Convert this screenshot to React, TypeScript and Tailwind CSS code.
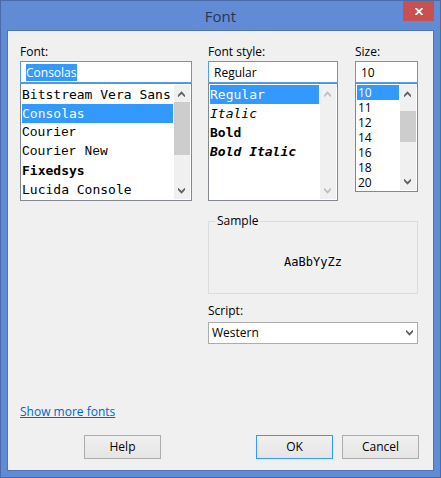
import { useEffect, useRef, useState } from "react";
import { clsx } from "clsx";

type Item = { name: string; className?: string };

const FONTS: Item[] = [
  { name: "Bitstream Vera Sans" },
  { name: "Consolas" },
  { name: "Courier", className: "font-['Liberation_Mono',monospace]" },
  { name: "Courier New", className: "font-['Liberation_Mono',monospace]" },
  { name: "Fixedsys", className: "font-bold" },
  { name: "Lucida Console" },
];

const STYLES: Item[] = [
  { name: "Regular" },
  { name: "Italic", className: "italic" },
  { name: "Bold", className: "font-bold" },
  { name: "Bold Italic", className: "font-bold italic" },
];

const SIZES: Item[] = ["10", "11", "12", "14", "16", "18", "20"].map((name) => ({ name }));

function Chevron({ up = false, className }: { up?: boolean; className?: string }) {
  return (
    <svg viewBox="0 0 8 6" className={clsx("h-[6px] w-[8px]", className)} aria-hidden="true">
      <path
        d={up ? "M0 6V4L3.5 0.3L7 4V6H6.6L3.5 3L0.4 6Z" : "M0 0V2L3.5 5.7L7 2V0H6.6L3.5 3L0.4 0Z"}
        fill="currentColor"
      />
    </svg>
  );
}

function ScrollBar({ thumb }: { thumb?: string }) {
  return (
    <div
      className={clsx(
        "flex w-4 shrink-0 flex-col items-center bg-[#f0f0f0]",
        thumb ? "text-[#606060]" : "text-[#bfbfbf]",
      )}
    >
      <div className="flex h-[17px] shrink-0 items-center">
        <Chevron up />
      </div>
      <div className="flex w-full flex-1 flex-col">
        {thumb && <div className={clsx("w-full bg-[#cdcdcd]", thumb)} />}
      </div>
      <div className="flex h-[17px] shrink-0 items-center">
        <Chevron />
      </div>
    </div>
  );
}

type PickerProps = {
  id: string;
  label: string;
  items: Item[];
  initial: string;
  className: string;
  frameClass: string;
  listClass?: string;
  rowClass: string;
  thumb?: string;
  focused?: boolean;
};

function Picker({
  id,
  label,
  items,
  initial,
  className,
  frameClass,
  listClass,
  rowClass,
  thumb,
  focused,
}: PickerProps) {
  const [value, setValue] = useState(initial);
  const input = useRef<HTMLInputElement>(null);

  useEffect(() => {
    if (focused) {
      input.current?.focus();
      input.current?.select();
    }
  }, [focused]);

  return (
    <div className={clsx("flex min-w-0 flex-col", className)}>
      <label htmlFor={id} className="leading-[18px]">
        {label}
      </label>
      <input
        id={id}
        ref={input}
        value={value}
        onChange={(e) => setValue(e.target.value)}
        className="h-[22px] w-full border border-[#569de5] bg-white px-[5px] outline-none selection:bg-[#3399ff] selection:text-white"
      />
      <div className={clsx("flex border border-[#828790] bg-white p-px", frameClass)}>
        <ul
          role="listbox"
          aria-label={label}
          className={clsx("mr-px min-w-0 flex-1 overflow-hidden whitespace-nowrap", listClass)}
        >
          {items.map((item) => (
            <li
              key={item.name}
              role="option"
              aria-selected={item.name === value}
              onClick={() => setValue(item.name)}
              className={clsx(
                "overflow-hidden",
                rowClass,
                item.className,
                item.name === value && "bg-[#3399ff] text-white",
              )}
            >
              {item.name}
            </li>
          ))}
        </ul>
        <ScrollBar thumb={thumb} />
      </div>
    </div>
  );
}

const button =
  "h-6 w-[77px] border bg-linear-to-b from-[#f0f0f0] to-[#e5e5e5] text-center leading-[20px]";
const monoList = "font-['DejaVu_Sans_Mono',monospace] text-[13px]";
const monoRow = "h-[19px] leading-[19px]";

export default function App() {
  return (
    <div className="flex min-h-screen flex-col border border-[#4a6ba8] bg-[#628bd5] px-[6px] pb-[6px] font-['Open_Sans','Noto_Sans',sans-serif] text-[12px] text-black">
      <header className="grid h-[29px] grid-cols-[1fr_auto_1fr]">
        <h1 className="col-start-2 text-[15px] leading-[30px] text-[#2b3554]">Font</h1>
        <button
          type="button"
          aria-label="Close"
          className="flex h-5 w-[31px] items-center justify-center justify-self-end bg-[#c75050] text-white"
        >
          <svg viewBox="0 0 8 7" className="h-[7px] w-[8px]" aria-hidden="true">
            <path d="M0.5 0L7.5 7M7.5 0L0.5 7" stroke="currentColor" strokeWidth="1.8" />
          </svg>
        </button>
      </header>

      <main className="flex flex-1 flex-col border border-[#4d73b8] bg-[#f0f0f0] pt-3 pb-[11px]">
        <div className="flex gap-4 pr-[15px] pl-3">
          <Picker
            id="font"
            label="Font:"
            items={FONTS}
            initial="Consolas"
            className="flex-1"
            frameClass="h-[118px]"
            listClass={monoList}
            rowClass={monoRow}
            thumb="h-[53px]"
            focused
          />
          <div className="flex w-[210px] flex-col">
            <div className="flex justify-between">
              <Picker
                id="style"
                label="Font style:"
                items={STYLES}
                initial="Regular"
                className="w-[130px]"
                frameClass="h-[118px]"
                listClass={monoList}
                rowClass={monoRow}
              />
              <Picker
                id="size"
                label="Size:"
                items={SIZES}
                initial="10"
                className="w-[63px]"
                frameClass="h-[109px]"
                rowClass="h-[15px] px-px leading-[15px]"
                thumb="mt-[9px] h-[31px]"
              />
            </div>

            <fieldset className="mt-[11px] h-[82px] border border-[#dcdcdc] px-[6px]">
              <legend className="px-[2px] leading-[18px]">Sample</legend>
              <p className="pt-6 text-center font-['DejaVu_Sans_Mono',monospace] leading-[16px]">
                AaBbYyZz
              </p>
            </fieldset>

            <label htmlFor="script" className="mt-2 mb-[2px] leading-[18px]">
              Script:
            </label>
            <div className="grid items-center">
              <select
                id="script"
                className="col-start-1 row-start-1 h-[22px] w-full appearance-none border border-[#acacac] bg-white px-[3px]"
              >
                <option>Western</option>
              </select>
              <Chevron className="pointer-events-none col-start-1 row-start-1 mr-1 justify-self-end text-[#606060]" />
            </div>
          </div>
        </div>

        <div className="mt-auto pl-3">
          <a href="#more" className="leading-[18px] text-[#0066cc] underline">
            Show more fonts
          </a>
        </div>
        <footer className="mt-[14px] flex pr-[14px] pl-[76px]">
          <button type="button" className={clsx(button, "mr-auto border-[#acacac]")}>
            Help
          </button>
          <button type="button" className={clsx(button, "mr-[9px] border-[#3399ff]")}>
            OK
          </button>
          <button type="button" className={clsx(button, "border-[#acacac]")}>
            Cancel
          </button>
        </footer>
      </main>
    </div>
  );
}
